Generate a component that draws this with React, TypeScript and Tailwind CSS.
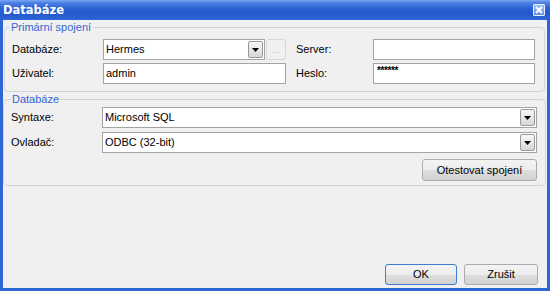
import React from "react";

function Arrow() {
  return (
    <span className="ml-auto mr-[1px] flex h-[17px] w-[15px] items-center justify-center rounded-[2px] border border-[#9a9a9a] bg-[linear-gradient(to_bottom,#f6f6f6_0%,#e8e8e8_50%,#d6d6d6_100%)]">
      <svg width="7" height="4" viewBox="0 0 7 4">
        <polygon points="0,0 7,0 3.5,4" fill="#000" />
      </svg>
    </span>
  );
}

function Select({ value, className }: { value: string; className: string }) {
  return (
    <div className={"flex h-[21px] items-center border border-[#a4a4a4] bg-white " + className}>
      <span className="pl-[2px] text-black">{value}</span>
      <Arrow />
    </div>
  );
}

function Input({ value, className }: { value: string; className: string }) {
  return (
    <div className={"flex h-[21px] items-center border border-[#a4a4a4] bg-white pl-[2px] text-black " + className}>
      {value}
    </div>
  );
}

function Btn({ label, className }: { label: string; className: string }) {
  return (
    <div
      className={
        "flex items-center justify-center rounded-[3px] border bg-[linear-gradient(to_bottom,#f4f4f4_0%,#ececec_50%,#dedede_51%,#d2d2d2_100%)] text-black " +
        className
      }
    >
      {label}
    </div>
  );
}

export default function App() {
  return (
    <div className="flex h-[291px] w-[550px] flex-col font-['Liberation_Sans',Arial,sans-serif] text-[11px] leading-[13px]">
      <div className="flex h-[20px] items-center justify-between bg-[linear-gradient(to_bottom,#7aa6f0_0%,#4a80e4_15%,#2a5ed2_45%,#2459cc_70%,#2d66d8_100%)] pl-[3px] pr-[5px]">
        <span className="font-['DejaVu_Sans',sans-serif] text-[11.5px] font-bold text-white">Databáze</span>
        <span className="flex h-[12px] w-[12px] items-center justify-center rounded-[1px] border border-[#e8f0ff] bg-[linear-gradient(to_bottom,#9cc0f6,#5a8ee6)]">
          <svg width="8" height="8" viewBox="0 0 8 8">
            <path d="M1 1 L7 7 M7 1 L1 7" stroke="#fff" strokeWidth="2" />
          </svg>
        </span>
      </div>
      <div className="flex flex-1 flex-col border-x-[3px] border-b-[3px] border-[#2f66d6] bg-[#f0f0f0]">
        <fieldset className="ml-[1px] mr-[2px] mt-[1px] rounded-[4px] border border-[#d5d5d5] pb-[7px] pl-[7px] pt-[5px]">
          <legend className="ml-[-2px] px-[1px] text-[#3465d0]">Primární spojení</legend>
          <div className="flex h-[21px] items-center">
            <span className="w-[91px]">Databáze:</span>
            <Select value="Hermes" className="w-[162px]" />
            <div className="ml-[1px] flex h-[21px] w-[20px] items-end justify-center rounded-[3px] border border-[#d8d8d8] pb-[4px] text-[9px] leading-[9px] text-[#b8b8c8]">
              ...
            </div>
            <span className="ml-[10px] w-[77px]">Server:</span>
            <Input value="" className="w-[162px]" />
          </div>
          <div className="mt-[3px] flex h-[21px] items-center">
            <span className="w-[91px]">Uživatel:</span>
            <Input value="admin" className="w-[183px]" />
            <span className="ml-[10px] w-[77px]">Heslo:</span>
            <div className="flex h-[21px] w-[162px] items-start border border-[#a4a4a4] bg-white pl-[3px] pt-[2px] text-[10px] font-bold leading-[10px] tracking-[-0.4px] text-black">
              ******
            </div>
          </div>
        </fieldset>
        <fieldset className="ml-0 mr-[1px] mt-[1px] rounded-[4px] border border-[#d5d5d5] pb-[4px] pl-[7px] pr-[8px] pt-[1px]">
          <legend className="ml-0 px-[1px] text-[#3465d0]">Databáze</legend>
          <div className="flex h-[21px] items-center">
            <span className="w-[91px]">Syntaxe:</span>
            <Select value="Microsoft SQL" className="flex-1" />
          </div>
          <div className="mt-[4px] flex h-[21px] items-center">
            <span className="w-[91px]">Ovladač:</span>
            <Select value="ODBC (32-bit)" className="flex-1" />
          </div>
          <div className="mt-[6px] flex justify-end">
            <Btn label="Otestovat spojení" className="h-[22px] w-[115px] border-[#acacac]" />
          </div>
        </fieldset>
        <div className="flex-1" />
        <div className="flex justify-end gap-[7px] pb-[3px] pr-[9px]">
          <Btn label="OK" className="h-[21px] w-[72px] border-[#3c7fd1]" />
          <Btn label="Zrušit" className="h-[21px] w-[74px] border-[#acacac]" />
        </div>
      </div>
    </div>
  );
}
